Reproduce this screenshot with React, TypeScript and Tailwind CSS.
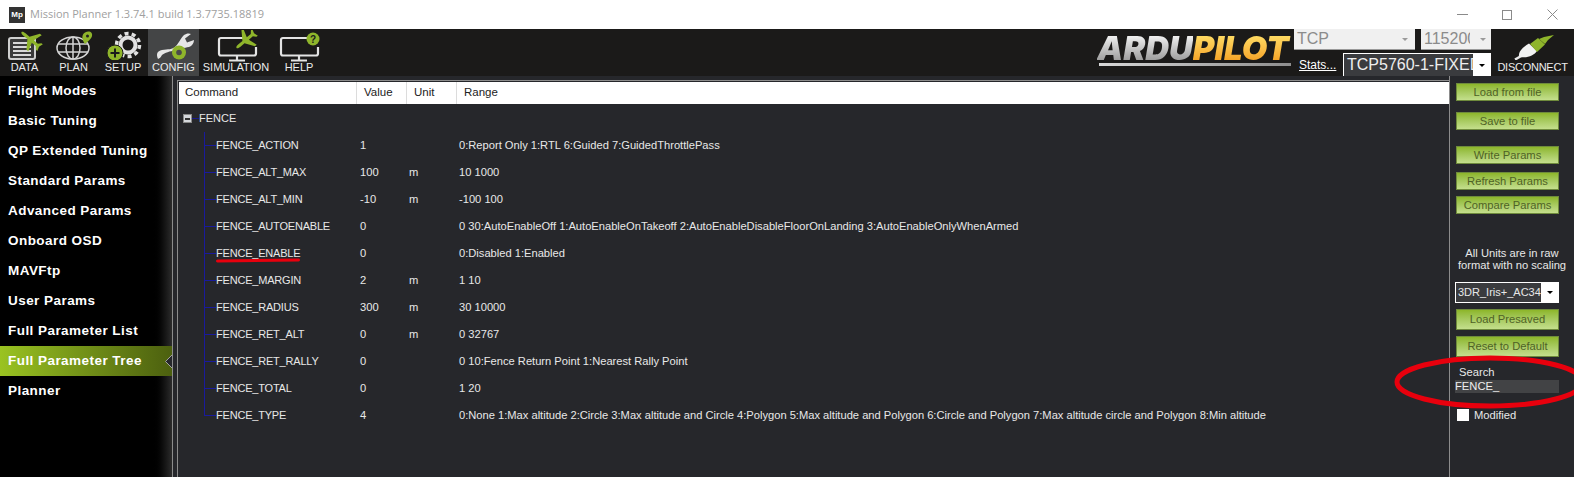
const green = "#8fb52b";

const params = [
  { name: "FENCE_ACTION", value: "1", unit: "", range: "0:Report Only 1:RTL 6:Guided 7:GuidedThrottlePass" },
  { name: "FENCE_ALT_MAX", value: "100", unit: "m", range: "10 1000" },
  { name: "FENCE_ALT_MIN", value: "-10", unit: "m", range: "-100 100" },
  { name: "FENCE_AUTOENABLE", value: "0", unit: "", range: "0 30:AutoEnableOff 1:AutoEnableOnTakeoff 2:AutoEnableDisableFloorOnLanding 3:AutoEnableOnlyWhenArmed" },
  { name: "FENCE_ENABLE", value: "0", unit: "", range: "0:Disabled 1:Enabled" },
  { name: "FENCE_MARGIN", value: "2", unit: "m", range: "1 10" },
  { name: "FENCE_RADIUS", value: "300", unit: "m", range: "30 10000" },
  { name: "FENCE_RET_ALT", value: "0", unit: "m", range: "0 32767" },
  { name: "FENCE_RET_RALLY", value: "0", unit: "", range: "0 10:Fence Return Point 1:Nearest Rally Point" },
  { name: "FENCE_TOTAL", value: "0", unit: "", range: "1 20" },
  { name: "FENCE_TYPE", value: "4", unit: "", range: "0:None 1:Max altitude 2:Circle 3:Max altitude and Circle 4:Polygon 5:Max altitude and Polygon 6:Circle and Polygon 7:Max altitude circle and Polygon 8:Min altitude" },
];

const menu = [
  "Flight Modes",
  "Basic Tuning",
  "QP Extended Tuning",
  "Standard Params",
  "Advanced Params",
  "Onboard OSD",
  "MAVFtp",
  "User Params",
  "Full Parameter List",
  "Full Parameter Tree",
  "Planner",
];

function Plane({ x, y, rot, s = 1 }: { x: number; y: number; rot: number; s?: number }) {
  return (
    <path
      transform={`translate(${x} ${y}) rotate(${rot}) scale(${s})`}
      fill={green}
      d="M0-13C1.2-13 1.7-11 1.7-9V-3.500L11 3V5.500L1.700 2.500V8L4.500 10.500V12.500L0 11L-4.500 12.500V10.500L-1.700 8V2.500L-11 5.500V3L-1.700-3.500V-9C-1.700-11-1.200-13 0-13Z"
    />
  );
}

// screen outline with a gap top right for the badge, stand below
function Monitor({ x }: { x: number }) {
  return (
    <g transform={`translate(${x} 0)`} fill="none" stroke="#e4e4e4" strokeWidth="2.200">
      <path d="M28 8H3Q1 8 1 10V23.500Q1 25.500 3 25.500H36Q38 25.500 38 23.500V17" />
      <path d="M19 25.500V30M11 30.500H27" />
    </g>
  );
}

function DataIcon() {
  return (
    <svg width="49" height="30" viewBox="0 0 49 30">
      <rect x="9" y="8" width="26" height="21" rx="2" fill="#3a3a3a" stroke="#cfcfcf" strokeWidth="2" />
      <path d="M13 13H31M13 17H31M13 21H31M13 25H31" stroke="#d8d8d8" strokeWidth="2" />
      <Plane x={31} y={10} rot={-50} s={0.95} />
    </svg>
  );
}

function PlanIcon() {
  return (
    <svg width="49" height="30" viewBox="0 0 49 30">
      <g fill="none" stroke="#d4d4d4" strokeWidth="1.500">
        <ellipse cx="24" cy="18" rx="16" ry="11" />
        <ellipse cx="24" cy="18" rx="7" ry="11" />
        <path d="M24 7V29M9 14H39M9 22H39" />
      </g>
      <path d="M36 14C33 10 32 5 36 2.500C40 0 44 2 43 6C42.500 9 39 11 36 14Z" fill={green} />
      <circle cx="38.500" cy="6" r="1.500" fill="#222" />
    </svg>
  );
}

function SetupIcon() {
  return (
    <svg width="50" height="30" viewBox="0 0 50 30">
      <circle cx="30" cy="15" r="7.500" fill="none" stroke="#e2e2e2" strokeWidth="4" />
      <circle cx="30" cy="15" r="11.500" fill="none" stroke="#e2e2e2" strokeWidth="3.500" strokeDasharray="4 3.200" />
      <circle cx="17" cy="23" r="8" fill={green} stroke="#1b1b1b" strokeWidth="1" />
      <path d="M17 18.500V27.500M12.500 23H21.500" stroke="#1b1b1b" strokeWidth="2" />
    </svg>
  );
}

function ConfigIcon() {
  return (
    <svg width="51" height="30" viewBox="0 0 51 30">
      <path
        d="M10 29C8 24 9 21 14 20C20 19 24 20 28 16C31 13 32 9 36 5C38 3.500 41 3 43 4L37 8.500L39 12.500L46 10C46 13 44 16 41 17C36 18 32 18 29 21C24 20 17 23 14 25C13 27 12 28 10 29Z"
        fill="#e6e6e6"
      />
      <circle cx="31" cy="22.500" r="7" fill={green} />
      <circle cx="31" cy="22.500" r="2.800" fill="#4b4b4b" />
    </svg>
  );
}

function SimIcon() {
  return (
    <svg width="74" height="32" viewBox="0 0 74 32" className="-mb-[2px]">
      <Monitor x={19} />
      <Plane x={47} y={10} rot={-130} s={0.95} />
    </svg>
  );
}

function HelpIcon() {
  return (
    <svg width="52" height="32" viewBox="0 0 52 32" className="-mb-[2px]">
      <Monitor x={7} />
      <circle cx="40" cy="9" r="6.500" fill={green} />
      <text x="40" y="12.500" textAnchor="middle" fontSize="10" fontWeight="700" fill="#1b1b1b" fontFamily="Liberation Sans, sans-serif">?</text>
    </svg>
  );
}

function PlugIcon() {
  return (
    <svg width="83" height="30" viewBox="0 0 83 30">
      <g transform="translate(20 0)">
        <path d="M4 29.500L12 25" stroke="#e8e8e8" strokeWidth="2.500" />
        <path d="M8 26.500C7 21 13 16.500 18 13.500L26 21C23 25.500 15 29 8 26.500Z" fill="#f2f2f2" />
        <path d="M19 14L27 8L34 14.500L26 22Z" fill={green} />
        <path d="M28 9L33 7L43 5L37 10L34 14Z" fill={green} />
      </g>
    </svg>
  );
}

function ToolItem({ label, width, active, children }: { label: string; width: string; active?: boolean; children: React.ReactNode }) {
  return (
    <div className={`flex flex-col items-center pt-[1px] ${width} ${active ? "bg-[#444546]" : ""}`}>
      <div className="h-[30px]">{children}</div>
      <span className="text-[11px] leading-[14px] text-[#ececec]">{label}</span>
    </div>
  );
}

function GreenButton({ label, className }: { label: string; className: string }) {
  return (
    <div className={`flex w-[103px] items-center justify-center border border-[#6f8b3c] bg-linear-to-b from-[#8db628] to-[#c4df8c] text-[11.2px] text-[#4f6226] ${className}`}>
      {label}
    </div>
  );
}

function Caret() {
  return <div className="h-0 w-0 border-x-[3px] border-t-[3px] border-x-transparent border-t-black" />;
}

export default function App() {
  return (
    <div className="relative flex h-[477px] w-[1574px] flex-col overflow-hidden bg-[#26272b] font-['Liberation_Sans',sans-serif] text-[11.2px] text-[#e8e8e8]">
      {/* title bar */}
      <div className="flex h-[29px] items-center bg-white">
        <div className="ml-[9px] flex h-[16px] w-[16px] items-center justify-center bg-[#333] text-[8px] font-bold text-white">Mp</div>
        <span className="ml-[5px] font-['Open_Sans',sans-serif] text-[11px] text-[#a0a0a0]">Mission Planner 1.3.74.1 build 1.3.7735.18819</span>
        <div className="ml-auto flex items-center">
          <div className="h-px w-[11px] bg-[#8a8a8a]" />
          <div className="ml-[34px] h-[10px] w-[10px] border border-[#8a8a8a]" />
          <svg className="ml-[35px] mr-[16px]" width="11" height="11" viewBox="0 0 11 11">
            <path d="M0.500 0.500L10.500 10.500M10.500 0.500L0.500 10.500" stroke="#8a8a8a" />
          </svg>
        </div>
      </div>

      {/* toolbar */}
      <div className="flex h-[47px] bg-[#1b1a19]">
        <ToolItem label="DATA" width="w-[49px]"><DataIcon /></ToolItem>
        <ToolItem label="PLAN" width="w-[49px]"><PlanIcon /></ToolItem>
        <ToolItem label="SETUP" width="w-[50px]"><SetupIcon /></ToolItem>
        <ToolItem label="CONFIG" width="w-[51px]" active><ConfigIcon /></ToolItem>
        <ToolItem label="SIMULATION" width="w-[74px]"><SimIcon /></ToolItem>
        <ToolItem label="HELP" width="w-[52px]"><HelpIcon /></ToolItem>

        <div className="ml-[772px] w-[197px] pt-[6px]">
          <div className="flex h-[26px] items-center justify-end pr-[3px] font-['Inter',sans-serif] text-[33px] font-black italic leading-none">
            <span className="bg-linear-to-b from-white to-[#8e8e8e] bg-clip-text text-transparent">ARDU</span>
            <span className="bg-linear-to-b from-[#ffe36a] to-[#f49a12] bg-clip-text pr-[2px] text-transparent">PILOT</span>
          </div>
          <div className="ml-[2px] mr-[3px] mt-[2px] h-[3px] bg-linear-to-r from-[#d8d8d8] to-[#8e8e8e]" />
        </div>

        <div className="flex w-[197px] flex-col">
          <div className="flex h-[21px] gap-[6px]">
            <div className="flex w-[121px] items-center justify-between border-b border-[#9a9a9a] bg-[#f0f0f0] pl-[3px] pr-[7px] text-[16px] text-[#8b8b8b]">
              TCP
              <div className="h-0 w-0 border-x-[3px] border-t-[3px] border-x-transparent border-t-[#9a9a9a]" />
            </div>
            <div className="flex w-[70px] items-center justify-between border-b border-[#9a9a9a] bg-[#f0f0f0] pl-[3px] pr-[5px] text-[16px] text-[#8b8b8b]">
              <span className="w-[46px] overflow-hidden">115200</span>
              <div className="h-0 w-0 border-x-[3px] border-t-[3px] border-x-transparent border-t-[#9a9a9a]" />
            </div>
          </div>
          <div className="mt-[3px] flex h-[23px] items-center">
            <span className="ml-[5px] w-[44px] text-[12px] text-white underline">Stats...</span>
            <div className="flex h-[23px] w-[148px] border-x border-t border-white bg-[#3a3b3e]">
              <span className="w-[129px] overflow-hidden whitespace-nowrap pl-[3px] text-[16px] leading-[22px] text-[#eeeeee]">TCP5760-1-FIXED</span>
              <div className="flex flex-1 items-center justify-center bg-white"><Caret /></div>
            </div>
          </div>
        </div>

        <div className="flex flex-1 flex-col items-center pt-[1px]">
          <div className="h-[30px]"><PlugIcon /></div>
          <span className="text-[11px] leading-[14px] tracking-[-0.25px] text-[#ececec]">DISCONNECT</span>
        </div>
      </div>

      <div className="flex min-h-0 flex-1">
        {/* side menu */}
        <div className="w-[172px] bg-linear-to-r from-black from-[88%] to-[#2c2c2c]">
          {menu.map((item) => (
            <div
              key={item}
              className={`relative flex h-[30px] items-center pl-[8px] text-[13.5px] font-bold tracking-[0.45px] text-white ${item === "Full Parameter Tree" ? "bg-linear-to-r from-[#9ac321] to-[#4c600f]" : ""}`}
            >
              {item}
              {item === "Full Parameter Tree" && (
                <svg className="absolute right-0 top-[9px]" width="7" height="13" viewBox="0 0 7 13">
                  <path d="M7 0L0.500 6.500L7 13Z" fill="#26272b" />
                  <path d="M7 0L0.500 6.500L7 13" fill="none" stroke="#a0a0a0" />
                </svg>
              )}
            </div>
          ))}
        </div>
        <div className="w-px bg-[#8c8c8c]" />

        {/* parameter table */}
        <div className="ml-[4px] mt-[4px] flex w-[273px] grow flex-col border-l border-t border-[#8c8c8c] pl-px pt-px">
          <div className="grid h-[22px] grid-cols-[178px_50px_50px_1fr] bg-white text-[11.5px] text-[#222]">
            <div className="flex items-center border-r border-[#dcdcdc] pl-[6px]">Command</div>
            <div className="flex items-center border-r border-[#dcdcdc] pl-[7px]">Value</div>
            <div className="flex items-center border-r border-[#dcdcdc] pl-[7px]">Unit</div>
            <div className="flex items-center pl-[7px]">Range</div>
          </div>
          <div className="mt-px flex h-[27px] items-center pl-[4px]">
            <div className="flex h-[9px] w-[9px] items-center justify-center border border-[#888] bg-[#d4d7dc]">
              <div className="h-[2px] w-[5px] bg-[#333]" />
            </div>
            <div className="h-px w-[7px] bg-[#1a1a8c]" />
            <span className="text-[11px]">FENCE</span>
          </div>
          {params.map((p, i) => (
            <div key={p.name} className="grid h-[27px] grid-cols-[177px_50px_50px_1fr] items-center">
              <div className="flex h-full items-center pl-[25px]">
                <div className={`w-px bg-[#1a1a9c] ${i === params.length - 1 ? "mb-[13px] h-[14px]" : "h-full"}`} />
                <div className="h-px w-[11px] bg-[#1a1a9c]" />
                <span className="text-[11px] tracking-[-0.2px]">{p.name}</span>
              </div>
              <div className="pl-[4px]">{p.value}</div>
              <div className="pl-[3px]">{p.unit}</div>
              <div className="whitespace-nowrap pl-[3px] text-[11.15px]">{p.range}</div>
            </div>
          ))}
        </div>

        {/* right buttons */}
        <div className="relative flex w-[125px] flex-col border-l border-[#8c8c8c] pl-[6px] pt-[7px]">
          <GreenButton label="Load from file" className="h-[18px]" />
          <GreenButton label="Save to file" className="mt-[11px] h-[18px]" />
          <GreenButton label="Write Params" className="mt-[16px] h-[18px]" />
          <GreenButton label="Refresh Params" className="mt-[8px] h-[18px]" />
          <GreenButton label="Compare Params" className="mt-[6px] h-[18px]" />
          <div className="-ml-[6px] mt-[33px] text-center leading-[12px]">
            All Units are in raw
            <br />
            format with no scaling
          </div>
          <div className="-ml-px mt-[11px] flex h-[21px] w-[104px] border border-white bg-[#3a3b3e]">
            <span className="w-[85px] overflow-hidden whitespace-nowrap pl-[2px] text-[11px] leading-[19px]">3DR_Iris+_AC34.</span>
            <div className="flex flex-1 items-center justify-center bg-white"><Caret /></div>
          </div>
          <GreenButton label="Load Presaved" className="mt-[6px] h-[21px]" />
          <GreenButton label="Reset to Default" className="mt-[6px] h-[21px]" />
          <span className="ml-[3px] mt-[8px] leading-[14px]">Search</span>
          <div className="-ml-px mt-[1px] h-[13px] w-[104px] bg-[#424345] leading-[13px] text-[#eee]">FENCE_</div>
          <div className="mt-[14px] flex items-center gap-[5px]">
            <div className="ml-[1px] h-[12px] w-[12px] bg-white" />
            <span>Modified</span>
          </div>
        </div>
      </div>

      {/* red annotations drawn on top of the screenshot */}
      <div className="absolute left-[216px] top-[259px] h-[3px] w-[84px] -rotate-[0.7deg] rounded-full bg-[#e8000d]" />
      <svg className="absolute left-[1390px] top-[350px]" width="184" height="64" viewBox="0 0 184 64">
        <ellipse cx="100" cy="32" rx="93" ry="24" fill="none" stroke="#e8000d" strokeWidth="5" />
      </svg>
    </div>
  );
}
